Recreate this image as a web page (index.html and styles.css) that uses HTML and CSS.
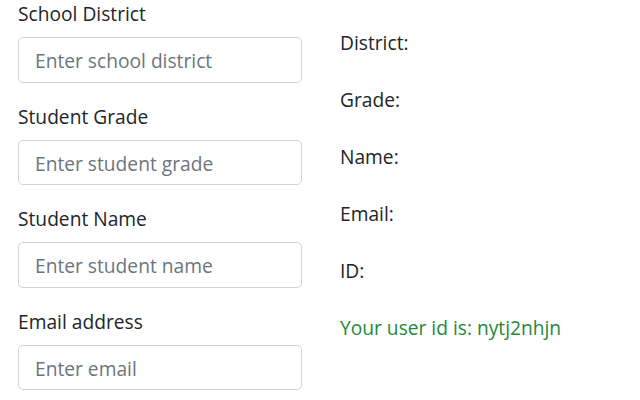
FILE: index.html
```html
<!DOCTYPE html>
<html>
<head>
<meta charset="utf-8">
<link rel="stylesheet" href="styles.css">
</head>
<body>
<div class="container">
  <div class="row">
    <div class="col">
      <div class="form-group">
        <label>School District</label>
        <input class="form-control" placeholder="Enter school district">
      </div>
      <div class="form-group">
        <label>Student Grade</label>
        <input class="form-control" placeholder="Enter student grade">
      </div>
      <div class="form-group">
        <label>Student Name</label>
        <input class="form-control" placeholder="Enter student name">
      </div>
      <div class="form-group">
        <label>Email address</label>
        <input class="form-control" placeholder="Enter email">
      </div>
    </div>
    <div class="col col-info">
      <p class="info">District:</p>
      <p class="info">Grade:</p>
      <p class="info">Name:</p>
      <p class="info">Email:</p>
      <p class="info">ID:</p>
      <p class="info success">Your user id is: nytj2nhjn</p>
    </div>
  </div>
</div>
</body>
</html>
```
FILE: styles.css
```css
html, body {
  margin: 0;
  padding: 0;
  background: #fff;
}
body {
  font-family: "Open Sans", "Noto Sans", sans-serif;
  font-size: 19.2px;
  line-height: 28.8px;
  color: #212529;
}
.container {
  width: 640px;
  box-sizing: border-box;
  padding: 0 18px;
}
.row {
  display: flex;
  margin: 0 -18px;
}
.col {
  width: 320px;
  box-sizing: border-box;
  padding: 0 18px;
}
.form-group {
  margin-bottom: 18.6px;
  display: flex;
  flex-direction: column;
  align-items: flex-start;
}
.form-group:first-child {
  margin-top: -1.4px;
}
label {
  display: block;
  padding-top: 1.5px;
  margin-bottom: 8.1px;
}
.form-control {
  display: block;
  width: 100%;
  height: 45.6px;
  box-sizing: border-box;
  padding: 8px 14.4px 6.4px 16px;
  font: inherit;
  color: #495057;
  border: 1.2px solid #ced4da;
  border-radius: 4.8px;
  background: #fff;
  outline: none;
}
.form-control::placeholder {
  color: #6c757d;
  opacity: 1;
}
.col-info {
  padding-top: 29px;
  padding-left: 20px;
}
.info {
  margin: 0 0 28.2px;
}
.success {
  color: #23893a;
}
```
